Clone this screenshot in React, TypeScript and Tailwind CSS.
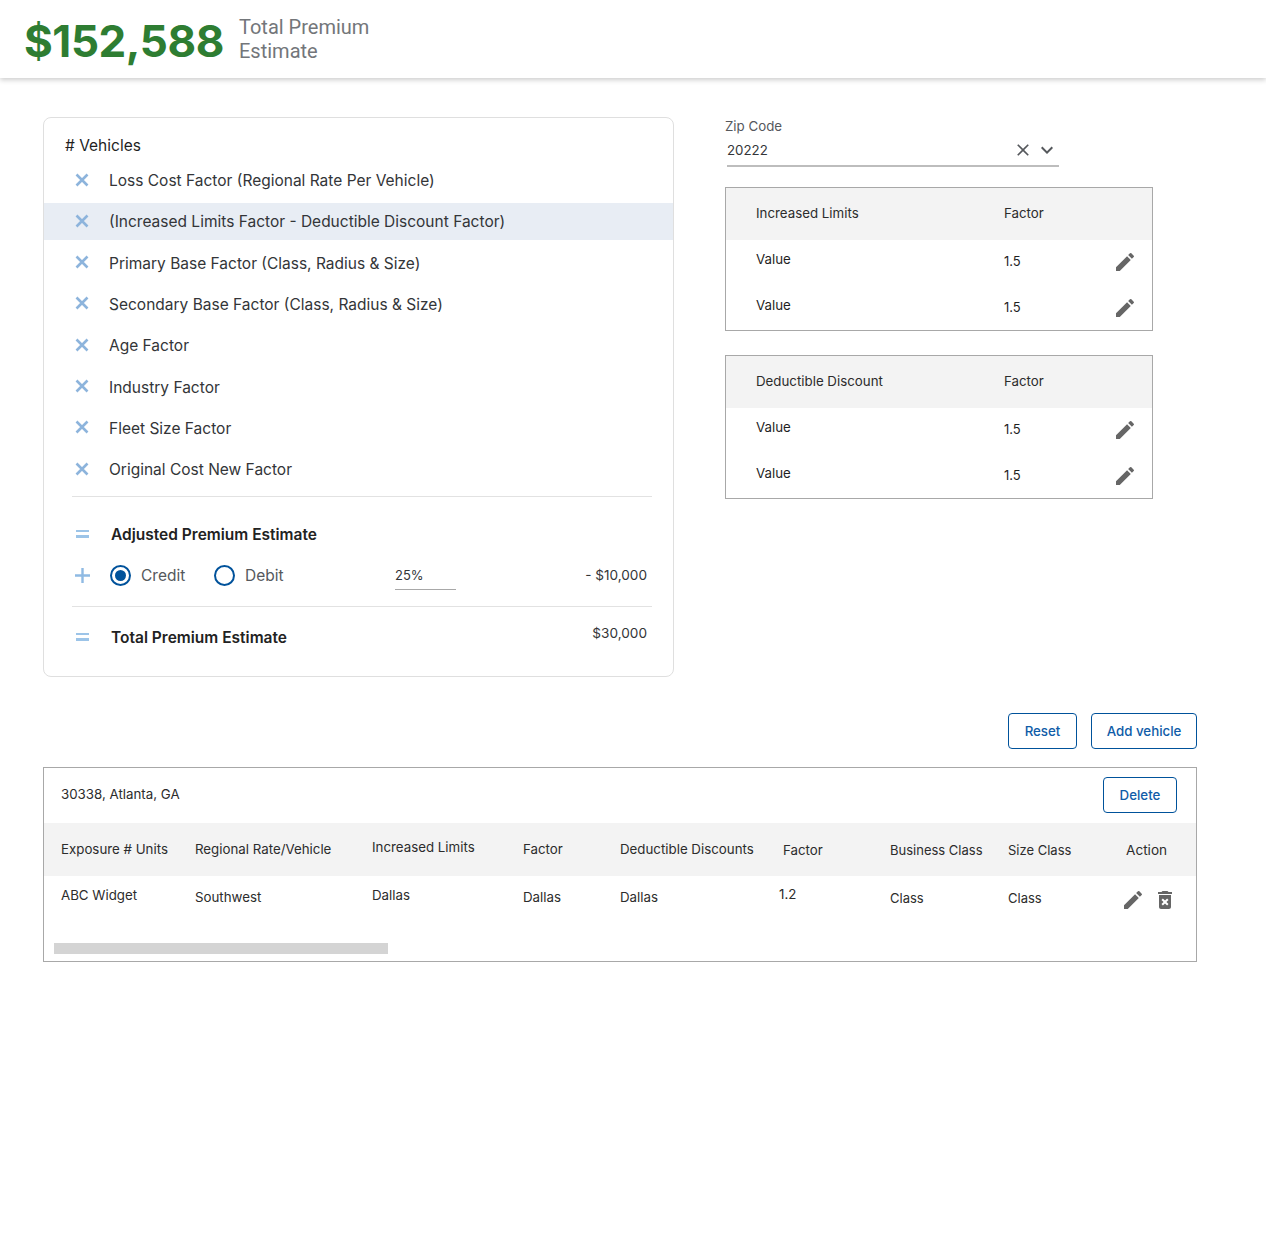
import { MdClose, MdDeleteForever, MdEdit, MdExpandMore } from "react-icons/md";

const factors = [
  "Loss Cost Factor (Regional Rate Per Vehicle)",
  "(Increased Limits Factor - Deductible Discount Factor)",
  "Primary Base Factor (Class, Radius & Size)",
  "Secondary Base Factor (Class, Radius & Size)",
  "Age Factor",
  "Industry Factor",
  "Fleet Size Factor",
  "Original Cost New Factor",
];

function EqualIcon() {
  return (
    <div className="mt-[-2px] flex w-[13px] flex-col gap-[3px]">
      <div className="h-[2.5px] bg-[#9cc4e8]" />
      <div className="h-[2.5px] bg-[#9cc4e8]" />
    </div>
  );
}

function Radio({ checked, label, width }: { checked?: boolean; label: string; width: string }) {
  return (
    <div className={`flex items-center gap-[10px] ${width}`}>
      <div className="flex h-[21px] w-[21px] items-center justify-center rounded-full border-2 border-[#00529b]">
        {checked && <div className="h-[11px] w-[11px] rounded-full bg-[#00529b]" />}
      </div>
      <span className="text-[15.5px] text-[#55585c]">{label}</span>
    </div>
  );
}

function LimitTable({ title }: { title: string }) {
  return (
    <div className="h-[144px] w-[428px] border border-[#a8a8a8] text-[13.3px] text-[#1f1f1f]">
      <div className="flex h-[52px] items-center bg-[#f3f3f3] pl-[30px]">
        <div className="w-[248px] text-[#2c2c2c]">{title}</div>
        <div className="text-[#2c2c2c]">Factor</div>
      </div>
      {[0, 1].map((i) => (
        <div key={i} className={`flex h-[46px] items-center pl-[30px] ${i === 0 ? "mt-[-2px]" : ""}`}>
          <div className="mt-[-2px] w-[248px]">Value</div>
          <div className="mt-[2px] w-[109px] text-[13px]">1.5</div>
          <MdEdit className="mt-[2px] text-[#666666]" size={24} />
        </div>
      ))}
    </div>
  );
}

const Button = ({ label, width }: { label: string; width: string }) => (
  <button className={`h-[36px] rounded-[4px] border border-[#00529b] pt-[1px] text-[13.3px] font-medium text-[#0f5ca8] ${width}`}>
    {label}
  </button>
);

export default function App() {
  return (
    <div className="min-h-[1238px] bg-white font-['Inter',sans-serif] text-[#1f1f1f]">
      <header className="flex h-[78px] items-center pl-[24px] shadow-[0_2px_5px_rgba(0,0,0,0.2)]">
        <div className="mt-[3px] w-[215px] text-[44px] leading-none font-bold tracking-[-0.45px] text-[#2e7d32]">$152,588</div>
        <div className="w-[150px] font-['Roboto',sans-serif] text-[20px] leading-[24px] text-[#73767a]">Total Premium Estimate</div>
      </header>

      <main className="pt-[39px] pl-[43px]">
        <div className="flex items-start">
          <section className="h-[560px] w-[631px] rounded-[8px] border border-[#dfdfdf] pt-[18px]">
            <div className="pl-[21px] text-[15.5px] leading-[20px]"># Vehicles</div>
            <div className="mt-[6px]">
              {factors.map((name, i) => (
                <div
                  key={name}
                  className={`flex h-[37px] items-center pl-[28px] text-[15.5px] text-[#333538] ${i > 0 ? "mt-[4.3px]" : ""} ${i === 1 ? "bg-[#e8edf4]" : ""}`}
                >
                  <svg width="20" height="20" viewBox="0 0 20 20" className="mt-[-2px] text-[#8db4dc]">
                    <path d="M4.5 4.5l11 11M15.5 4.5l-11 11" stroke="currentColor" strokeWidth="2.6" />
                  </svg>
                  <span className="mt-[0.5px] ml-[17px]">{name}</span>
                </div>
              ))}
            </div>
            <div className="mx-[28px] mt-[8px] mr-[21px] border-t border-[#e2e2e2]" />
            <div className="mt-[26px] flex items-center pl-[32px]">
              <EqualIcon />
              <span className="ml-[22px] text-[15.5px] font-semibold text-[#222222]">Adjusted Premium Estimate</span>
            </div>
            <div className="mt-[15px] flex items-center pl-[31px]">
              <svg width="15" height="15" viewBox="0 0 15 15" className="text-[#8fbae3]">
                <path d="M7.5 0v15M0 7.5h15" stroke="currentColor" strokeWidth="2.4" />
              </svg>
              <div className="ml-[20px] flex">
                <Radio checked label="Credit" width="w-[104px]" />
                <Radio label="Debit" width="w-[181px]" />
              </div>
              <div className="h-[29px] w-[61px] border-b border-[#a8a8a8] pt-[5px] text-[13px] text-[#333538]">25%</div>
              <div className="mt-[-2px] ml-auto pr-[26px] text-[13.6px] text-[#333538]">- $10,000</div>
            </div>
            <div className="mx-[28px] mt-[16px] mr-[21px] border-t border-[#e2e2e2]" />
            <div className="mt-[19px] flex items-center pl-[32px]">
              <EqualIcon />
              <span className="ml-[22px] text-[15.5px] font-semibold text-[#222222]">Total Premium Estimate</span>
              <span className="mt-[-9px] ml-auto pr-[26px] text-[13.6px] text-[#333538]">$30,000</span>
            </div>
          </section>

          <aside className="ml-[51px]">
            <div className="text-[13.3px] leading-[18px] text-[#55585c]">Zip Code</div>
            <div className="mt-[3px] ml-[2px] flex h-[29px] w-[332px] items-center border-b-2 border-[#bdbdbd] pb-[3px] text-[13.3px] text-[#333538]">
              <span className="mt-[2px]">20222</span>
              <MdClose className="ml-auto text-[#55585c]" size={20} />
              <MdExpandMore className="ml-[2px] text-[#55585c]" size={24} />
            </div>
            <div className="mt-[20px] flex flex-col gap-[24px]">
              <LimitTable title="Increased Limits" />
              <LimitTable title="Deductible Discount" />
            </div>
          </aside>
        </div>

        <div className="mt-[36px] flex w-[1154px] justify-end gap-[14px]">
          <Button label="Reset" width="w-[69px]" />
          <Button label="Add vehicle" width="w-[106px]" />
        </div>

        <section className="mt-[18px] h-[195px] w-[1154px] border border-[#a8a8a8] text-[13.3px] text-[#2c2c2c]">
          <div className="flex h-[55px] items-center justify-between pr-[19px] pb-[1px] pl-[17px]">
            <span>30338, Atlanta, GA</span>
            <Button label="Delete" width="w-[74px]" />
          </div>
          <div className="flex h-[53px] items-center bg-[#f3f3f3] pl-[17px]">
            <div className="w-[134px]">Exposure # Units</div>
            <div className="w-[177px]">Regional Rate/Vehicle</div>
            <div className="mt-[-4px] w-[151px]">Increased Limits</div>
            <div className="w-[97px]">Factor</div>
            <div className="w-[163px]">Deductible Discounts</div>
            <div className="mt-[2px] w-[107px]">Factor</div>
            <div className="mt-[2px] w-[118px] text-[13px]">Business Class</div>
            <div className="mt-[2px] w-[118px] text-[13px]">Size Class</div>
            <div className="mt-[2px] text-[13.6px]">Action</div>
          </div>
          <div className="flex h-[49px] items-center pl-[17px]">
            <div className="mt-[-9px] w-[134px]">ABC Widget</div>
            <div className="mt-[-5px] w-[177px]">Southwest</div>
            <div className="mt-[-9px] w-[151px]">Dallas</div>
            <div className="mt-[-5px] w-[97px]">Dallas</div>
            <div className="mt-[-5px] w-[159px]">Dallas</div>
            <div className="mt-[-12px] w-[111px]">1.2</div>
            <div className="mt-[-3px] w-[118px] text-[13px]">Class</div>
            <div className="mt-[-3px] w-[113px] text-[13px]">Class</div>
            <div className="mt-[-1px] flex gap-[8px] text-[#666666]">
              <MdEdit size={24} />
              <MdDeleteForever size={24} />
            </div>
          </div>
          <div className="mt-[18px] ml-[10px] h-[11px] w-[334px] bg-[#d4d4d4]" />
        </section>
      </main>
    </div>
  );
}
